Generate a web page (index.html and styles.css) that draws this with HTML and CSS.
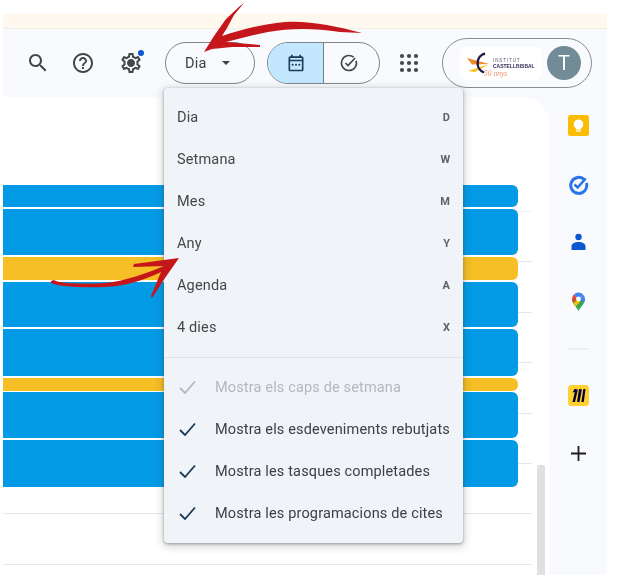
FILE: index.html
```html
<!DOCTYPE html>
<html lang="ca">
<head>
<meta charset="utf-8">
<title>Calendari</title>
<link rel="stylesheet" href="styles.css">
</head>
<body>
<div class="frame">
  <div class="banner"></div>
  <div class="main">
    <header class="toolbar">
      <svg class="ico ico-search" viewBox="0 0 24 24"><path d="M15.5 14h-.79l-.28-.27C15.41 12.59 16 11.11 16 9.5 16 5.91 13.09 3 9.5 3S3 5.91 3 9.5 5.91 16 9.5 16c1.61 0 3.09-.59 4.23-1.57l.27.28v.79l5 4.99L20.49 19l-4.99-5zm-6 0C7.01 14 5 11.99 5 9.5S7.01 5 9.5 5 14 7.01 14 9.5 11.99 14 9.5 14z"/></svg>
      <svg class="ico ico-help" viewBox="0 0 24 24"><path d="M11 18h2v-2h-2v2zm1-16C6.48 2 2 6.48 2 12s4.48 10 10 10 10-4.48 10-10S17.52 2 12 2zm0 18c-4.41 0-8-3.59-8-8s3.59-8 8-8 8 3.59 8 8-3.59 8-8 8zm0-14c-2.21 0-4 1.79-4 4h2c0-1.1.9-2 2-2s2 .9 2 2c0 2-3 1.75-3 5h2c0-2.25 3-2.5 3-5 0-2.21-1.79-4-4-4z"/></svg>
      <div class="gear">
        <svg class="ico" viewBox="0 0 24 24"><path d="M19.43 12.98c.04-.32.07-.64.07-.98 0-.34-.03-.66-.07-.98l2.11-1.65c.19-.15.24-.42.12-.64l-2-3.46c-.09-.16-.26-.25-.44-.25-.06 0-.12.01-.17.03l-2.49 1c-.52-.4-1.08-.73-1.69-.98l-.38-2.65C14.46 2.18 14.25 2 14 2h-4c-.25 0-.46.18-.49.42l-.38 2.65c-.61.25-1.17.59-1.69.98l-2.49-1c-.06-.02-.12-.03-.18-.03-.17 0-.34.09-.43.25l-2 3.46c-.13.22-.07.49.12.64l2.11 1.65c-.04.32-.07.65-.07.98 0 .33.03.66.07.98l-2.11 1.65c-.19.15-.24.42-.12.64l2 3.46c.09.16.26.25.44.25.06 0 .12-.01.17-.03l2.49-1c.52.4 1.08.73 1.69.98l.38 2.65c.03.24.24.42.49.42h4c.25 0 .46-.18.49-.42l.38-2.65c.61-.25 1.17-.59 1.69-.98l2.49 1c.06.02.12.03.18.03.17 0 .34-.09.43-.25l2-3.46c.12-.22.07-.49-.12-.64l-2.11-1.65zm-1.98-1.71c.04.31.05.52.05.73 0 .21-.02.43-.05.73l-.14 1.13.89.7 1.08.84-.7 1.21-1.27-.51-1.04-.42-.9.68c-.43.32-.84.56-1.25.73l-1.06.43-.16 1.13-.2 1.35h-1.4l-.19-1.35-.16-1.13-1.06-.43c-.43-.18-.83-.41-1.23-.71l-.91-.7-1.06.43-1.27.51-.7-1.21 1.08-.84.89-.7-.14-1.13c-.03-.31-.05-.54-.05-.74s.02-.43.05-.73l.14-1.13-.89-.7-1.08-.84.7-1.21 1.27.51 1.04.42.9-.68c.43-.32.84-.56 1.25-.73l1.06-.43.16-1.13.2-1.35h1.39l.19 1.35.16 1.13 1.06.43c.43.18.83.41 1.23.71l.91.7 1.06-.43 1.27-.51.7 1.21-1.07.85-.89.7.14 1.13zM12 8c-2.21 0-4 1.79-4 4s1.79 4 4 4 4-1.79 4-4-1.79-4-4-4zm0 6c-1.1 0-2-.9-2-2s.9-2 2-2 2 .9 2 2-.9 2-2 2z"/><circle cx="12" cy="12" r="2.6"/></svg>
        <span class="gear-dot"></span>
      </div>
      <button class="view-btn"><span>Dia</span><i class="caret"></i></button>
      <div class="toggle">
        <span class="toggle-part toggle-on">
          <svg class="ico-sm" viewBox="0 0 24 24"><path d="M19 4h-1V2h-2v2H8V2H6v2H5c-1.1 0-2 .9-2 2v14c0 1.1.9 2 2 2h14c1.1 0 2-.9 2-2V6c0-1.1-.9-2-2-2zm0 16H5V10h14v10zm0-12H5V6h14v2z"/><circle cx="8" cy="14" r="1.2"/><circle cx="12" cy="14" r="1.2"/><circle cx="16" cy="14" r="1.2"/></svg>
        </span>
        <span class="toggle-part toggle-off">
          <svg class="ico-sm ico-task" viewBox="0 0 24 24"><path d="M20.5 9.2A9 9 0 1 1 17.6 5" fill="none" stroke="#444746" stroke-width="1.9"/><path d="M7.8 12l3 3 8.5-9" fill="none" stroke="#444746" stroke-width="2"/></svg>
        </span>
      </div>
      <svg class="apps" viewBox="0 0 20 20"><circle cx="3" cy="3" r="2.1"/><circle cx="10" cy="3" r="2.1"/><circle cx="17" cy="3" r="2.1"/><circle cx="3" cy="10" r="2.1"/><circle cx="10" cy="10" r="2.1"/><circle cx="17" cy="10" r="2.1"/><circle cx="3" cy="17" r="2.1"/><circle cx="10" cy="17" r="2.1"/><circle cx="17" cy="17" r="2.1"/></svg>
      <div class="account">
        <div class="logo">
          <svg class="logo-svg" viewBox="0 0 82 33">
            <path d="M7 11l22 6-17 .5z" fill="#f08a24"/>
            <path d="M8 24l21-7-14 8z" fill="#f5c21b"/>
            <path d="M25 6.500a10 10 0 0 0-1 19" fill="none" stroke="#1c1a4e" stroke-width="2.400"/>
            <text class="logo-t1" x="33" y="14.500">INSTITUT</text>
            <text class="logo-t2" x="33" y="21">CASTELLBISBAL</text>
            <text class="logo-t3" x="24" y="29">50 anys</text>
          </svg>
        </div>
        <div class="avatar">T</div>
      </div>
    </header>
    <div class="content">
      <main class="panel">
        <div class="grid">
          <div class="hours">
            <div class="hour hour-first"></div>
            <div class="hour hour-a"></div>
            <div class="hour"></div>
            <div class="hour"></div>
            <div class="hour"></div>
            <div class="hour"></div>
            <div class="hour"></div>
            <div class="hour"></div>
            <div class="hour hour-last"></div>
          </div>
          <div class="events">
            <div class="ev blue h22"></div>
            <div class="ev blue h46"></div>
            <div class="ev yellow h23"></div>
            <div class="ev blue h45"></div>
            <div class="ev blue h47"></div>
            <div class="ev yellow h13"></div>
            <div class="ev blue h46 gap1"></div>
            <div class="ev blue h47"></div>
          </div>
        </div>
        <div class="scrollbar"></div>
      </main>
      <aside class="side">
        <div class="side-item">
          <svg class="side-ico" viewBox="0 0 21 21"><rect width="21" height="21" rx="2.500" fill="#fbbc04"/><path d="M10.500 4.500a4.800 4.800 0 0 0-2.600 8.800v1.200h5.200v-1.200a4.800 4.800 0 0 0-2.600-8.800z" fill="#fff"/><rect x="8.300" y="15.300" width="4.400" height="1.400" fill="#fff"/></svg>
        </div>
        <div class="side-item">
          <svg class="side-ico" viewBox="0 0 21 21"><path d="M16.500 5.800A8 8 0 1 0 18.400 9" fill="none" stroke="#2a73e8" stroke-width="3"/><path d="M6.500 10.500l3.200 3 8-9" fill="none" stroke="#2a73e8" stroke-width="2.600"/></svg>
        </div>
        <div class="side-item">
          <svg class="side-ico" viewBox="0 0 21 21"><circle cx="10.500" cy="5" r="3.200" fill="#0b57d0"/><path d="M3.500 18v-3.500C3.500 11.500 6.500 10 10.500 10s7 1.500 7 4.500V18z" fill="#0b57d0"/></svg>
        </div>
        <div class="side-item">
          <svg class="side-ico" viewBox="0 0 21 21"><path d="M10.500 20C8.500 15.500 4 13 4 8h13c0 5-4.500 7.500-6.500 12z" fill="#34a853"/><path d="M4 8a6.500 6.500 0 0 1 2-4.700L9 7l-3.500 5C4.500 10.800 4 9.500 4 8z" fill="#ea4335"/><path d="M6 3.300A6.500 6.500 0 0 1 15.500 4L12 7.500 9 7z" fill="#4285f4"/><path d="M15.500 4A6.500 6.500 0 0 1 17 8c0 1.500-.5 2.700-1.500 4L12 7.500z" fill="#4285f4"/><path d="M5.500 12L9 9.500l3.500 1-5 5z" fill="#fbbc04"/><circle cx="10.500" cy="8" r="2.400" fill="#fff"/></svg>
        </div>
        <div class="side-rule"></div>
        <div class="side-item">
          <svg class="side-ico" viewBox="0 0 21 21"><rect width="21" height="21" rx="3.500" fill="#ffd02f"/><path d="M6.500 4H9L8 5.500 10 4h0L7 17H4.500L6.800 7 4.500 7.500zM11 4h2.300L12.300 5.500 14 4 11.500 17H9zM15.300 4h2.200L15.800 17h-2.400z" fill="#050038"/></svg>
        </div>
        <div class="side-item">
          <svg class="plus" viewBox="0 0 15 15"><path d="M7.500 0v15M0 7.500h15" stroke="#1f1f1f" stroke-width="1.800"/></svg>
        </div>
      </aside>
    </div>
  </div>

  <nav class="menu">
    <div class="menu-item"><span>Dia</span><kbd>D</kbd></div>
    <div class="menu-item"><span>Setmana</span><kbd>W</kbd></div>
    <div class="menu-item"><span>Mes</span><kbd>M</kbd></div>
    <div class="menu-item"><span>Any</span><kbd>Y</kbd></div>
    <div class="menu-item"><span>Agenda</span><kbd>A</kbd></div>
    <div class="menu-item"><span>4 dies</span><kbd>X</kbd></div>
    <div class="menu-rule"></div>
    <div class="menu-check is-off"><svg class="check" viewBox="0 0 17 14"><path d="M1 8l5 5L16 1.500" fill="none" stroke="currentColor" stroke-width="1.800"/></svg><span>Mostra els caps de setmana</span></div>
    <div class="menu-check"><svg class="check" viewBox="0 0 17 14"><path d="M1 8l5 5L16 1.500" fill="none" stroke="currentColor" stroke-width="1.800"/></svg><span>Mostra els esdeveniments rebutjats</span></div>
    <div class="menu-check"><svg class="check" viewBox="0 0 17 14"><path d="M1 8l5 5L16 1.500" fill="none" stroke="currentColor" stroke-width="1.800"/></svg><span>Mostra les tasques completades</span></div>
    <div class="menu-check"><svg class="check" viewBox="0 0 17 14"><path d="M1 8l5 5L16 1.500" fill="none" stroke="currentColor" stroke-width="1.800"/></svg><span>Mostra les programacions de cites</span></div>
  </nav>

  <svg class="arrows" viewBox="0 0 620 575">
    <path d="M204 52L214 36 226 19 240 6 244 3 234 15 227 28 222 36C240 30 262 24 285 22 310 20.500 335 26 362 33L340 32C315 28 290 28 268 32 252 35 240 39 226 42L260 45 260 47 232 47 212 49z"/>
    <path d="M51 281L54 280C60 284 85 284 105 283 125 281 145 274 164 266L133 267 134 264 179 258 165 278 152 298 151 296 161 272C142 281 125 286 105 287 85 288 60 287 51 283z"/>
  </svg>
</div>
</body>
</html>
```
FILE: styles.css
```css
* { box-sizing: border-box; }
html, body { margin: 0; padding: 0; background: #fff; }
body { width: 620px; height: 575px; overflow: hidden; font-family: Roboto, "Liberation Sans", sans-serif; }

.frame { position: relative; width: 604px; height: 575px; margin-left: 3px; padding-top: 14px; display: flex; flex-direction: column; filter: blur(.45px); }
.banner { height: 15px; background: #fff8ee; border-bottom: 1px solid #f5ece2; flex: none; }
.main { flex: 1; min-height: 0; display: flex; flex-direction: column; background: #f8fafd; }

.toolbar { height: 68px; flex: none; display: flex; align-items: center; }
.ico { display: block; width: 24px; height: 24px; fill: #444746; }
.ico-search { margin-left: 23px; }
.ico-help { margin-left: 21px; }
.gear { position: relative; margin-left: 24px; }
.gear-dot { position: absolute; top: -1px; right: -1px; width: 6px; height: 6px; border-radius: 50%; background: #0b57d0; }

.view-btn { margin-left: 22px; width: 90px; height: 42px; border: 1px solid #80868b; border-radius: 21px; background: transparent; display: flex; align-items: center; padding: 0 0 0 19px; font: 400 14.500px Roboto, sans-serif; color: #3c4043; letter-spacing: .2px; }
.caret { margin-left: 15px; width: 0; height: 0; border: 4px solid transparent; border-top: 4px solid #3c4043; border-bottom: 0; }

.toggle { margin-left: 12px; width: 113px; height: 42px; border: 1px solid #80868b; border-radius: 21px; display: flex; overflow: hidden; }
.toggle-part { flex: 1; display: flex; align-items: center; justify-content: center; }
.toggle-on { flex: none; width: 56px; background: #c2e7ff; border-right: 1px solid #6f8088; }
.toggle-off { padding-right: 5px; }
.ico-sm { display: block; width: 20px; height: 20px; fill: #1c3a55; }
.ico-task { fill: none; }

.apps { display: block; margin-left: 19px; width: 20px; height: 20px; fill: #444746; }

.account { margin-left: 23px; width: 150px; height: 50px; border: 1px solid #8a8d90; border-radius: 25px; display: flex; align-items: center; padding-left: 17px; }
.logo { width: 82px; height: 33px; background: #fff; border-radius: 7px; flex: none; }
.logo-svg { display: block; width: 82px; height: 33px; }
.logo-t1 { font: 400 4.500px "Liberation Sans", sans-serif; letter-spacing: .9px; fill: #55556a; }
.logo-t2 { font: 700 5px "Liberation Sans", sans-serif; fill: #2c2c54; }
.logo-t3 { font: italic 400 7.500px "Liberation Serif", serif; fill: #ee9070; }
.avatar { margin-left: 5px; width: 34px; height: 34px; border-radius: 50%; background: #718b97; color: #fff; font: 400 20px Roboto, sans-serif; display: flex; align-items: center; justify-content: center; }

.content { flex: 1; min-height: 0; display: flex; }
.panel { position: relative; width: 546px; background: #fff; border-top-right-radius: 26px; padding-top: 88px; flex: none; overflow: hidden; }
.grid { position: relative; width: 529px; }
.hour { height: 50.400px; border-bottom: 1px solid #e3e7ef; }
.hour-first { height: 27px; border-bottom-color: #eef1f5; }
.hour-last { border-bottom: 2px solid #ebeff5; }
.events { position: absolute; inset: 0 14px auto 0; display: flex; flex-direction: column; gap: 2px; }
.ev { border-radius: 0 6px 6px 0; }
.blue { background: #039be5; }
.yellow { background: #f6bf26; }
.h22 { height: 22px; }
.h46 { height: 46px; }
.h23 { height: 23px; }
.h45 { height: 45px; }
.h47 { height: 47px; }
.h13 { height: 13px; }
.gap1 { margin-top: -1px; }

.scrollbar { position: absolute; left: 534px; top: 368px; bottom: 0; width: 8px; background: #e0e0e0; border-radius: 2px 2px 0 0; }

.side { flex: 1; display: flex; flex-direction: column; align-items: center; margin-top: -.5px; }
.side-item { height: 58.600px; flex: none; display: flex; align-items: center; justify-content: center; }
.side-ico { display: block; width: 21px; height: 21px; }
.plus { display: block; width: 15px; height: 15px; }
.side-rule { width: 21px; height: 2px; margin: 17px 0 16px; background: #eceff4; flex: none; }

.menu { position: absolute; left: 161px; top: 88px; width: 299px; height: 455px; background: #f0f4f9; border-radius: 4px; box-shadow: 0 1px 3px rgba(60,64,67,.45), 0 2px 8px 2px rgba(60,64,67,.2); padding-top: 8px; color: #444746; font-size: 14.500px; letter-spacing: .15px; }
.menu-item { height: 42px; display: flex; align-items: center; justify-content: space-between; padding: 0 13px; }
kbd { font: 700 11px Roboto, sans-serif; color: #5f6368; letter-spacing: 0; }
.menu-rule { height: 1px; background: #dde3ea; margin: 9px 0 8px; }
.menu-check { height: 42px; display: flex; align-items: center; padding-left: 15px; color: #3c4043; }
.menu-check .check { color: #1c3a55; }
.check { display: block; width: 17px; height: 14px; margin-right: 19px; flex: none; }
.is-off, .is-off .check { color: #b4b8bd; }

.arrows { position: absolute; left: -3px; top: 0; width: 620px; height: 575px; fill: #c5161c; pointer-events: none; }
```
